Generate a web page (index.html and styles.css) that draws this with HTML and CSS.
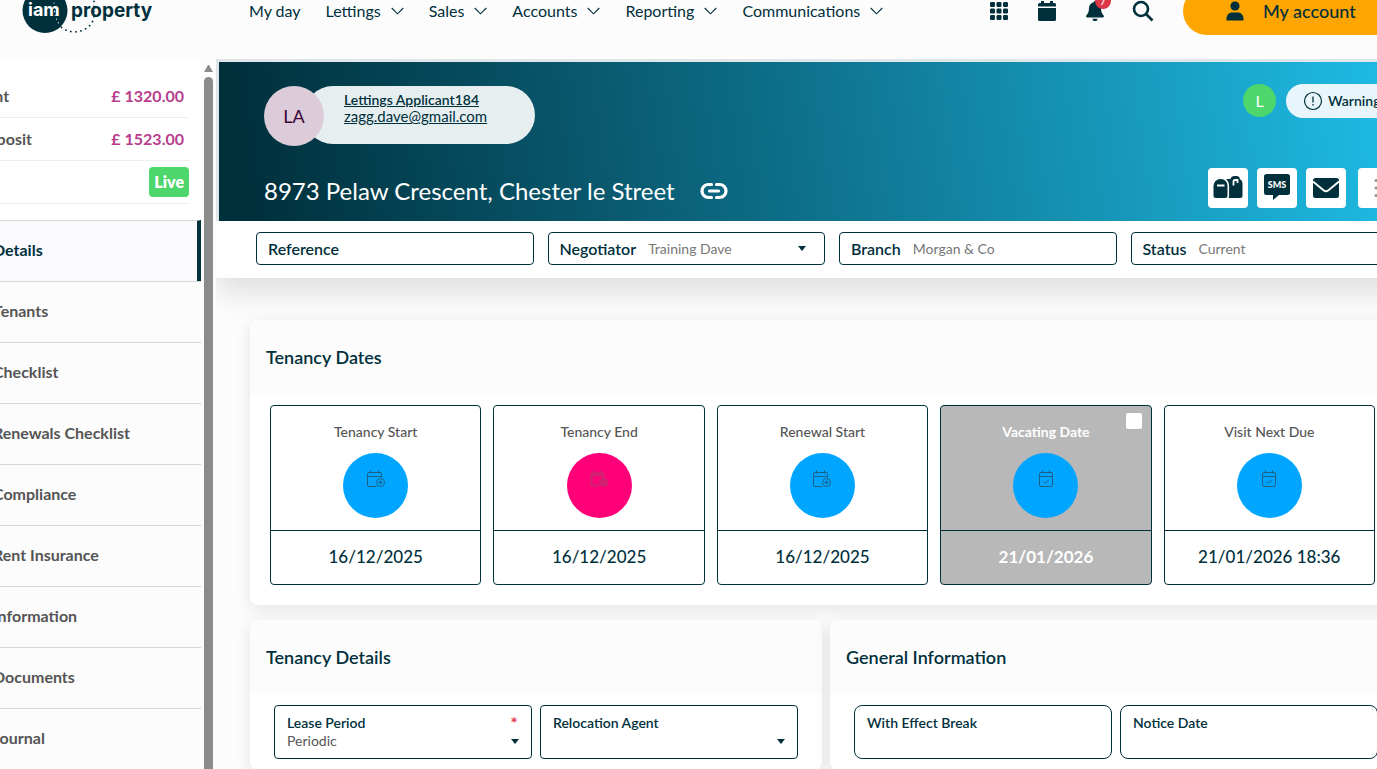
FILE: index.html
```html
<!DOCTYPE html>
<html lang="en">
<head>
<meta charset="utf-8">
<title>Tenancy - 8973 Pelaw Crescent</title>
<link rel="stylesheet" href="styles.css">
</head>
<body>
<svg class="sprite" aria-hidden="true">
  <symbol id="chevron" viewBox="0 0 13 8"><path d="M.7 1l5.800 5.800L12.300 1" fill="none" stroke="currentColor" stroke-width="1.100"/></symbol>
  <symbol id="cal-plus" viewBox="0 0 20 18"><g fill="none" stroke="currentColor" stroke-width="1"><path d="M10.500 16.500H3A1.500 1.500 0 0 1 1.500 15V4A1.500 1.500 0 0 1 3 2.500h11A1.500 1.500 0 0 1 15.500 4v3.500M1.500 6.500h14M4.500 .500v3M12.500 .500v3"/><circle cx="14.500" cy="12.500" r="4"/><path d="M14.500 10.300v4.400M12.300 12.500h4.400"/></g></symbol>
  <symbol id="cal-plus-solid" viewBox="0 0 20 18"><g fill="none" stroke="currentColor" stroke-width="2.500" opacity=".8"><path d="M10 15.500H4A1.500 1.500 0 0 1 2.500 14V5A1.500 1.500 0 0 1 4 3.500h9A1.500 1.500 0 0 1 14.500 5v3M2.500 5h12M5 .500v3M12 .500v3"/><circle cx="14.500" cy="12.500" r="3.200" fill="currentColor"/></g></symbol>
  <symbol id="cal-check" viewBox="0 0 20 18"><g fill="none" stroke="currentColor" stroke-width="1"><rect x="3.500" y="2.500" width="13" height="14" rx="1.500"/><path d="M3.500 6.500h13M6.500 .500v3M13.500 .500v3M7.300 11.300l2 2 3.600-3.600"/></g></symbol>
</svg>

<header class="topbar">
  <a class="logo" href="#" aria-label="iam property">
    <svg width="132" height="36" viewBox="0 0 132 36">
      <circle cx="23" cy="10.500" r="22.500" fill="#00303c"/>
      <path d="M33 14c1 22 33 24 39 4V1" fill="none" stroke="#00303c" stroke-width="1.800" stroke-linecap="round" stroke-dasharray=".1 5"/>
      <path d="M32 3c0 9 1 16 6 22" fill="none" stroke="#fff" stroke-width="1.200" stroke-linecap="round" stroke-dasharray=".1 4"/>
      <text class="logo-iam" x="6" y="16">iam</text>
      <text class="logo-property" x="49" y="17">property</text>
    </svg>
  </a>
  <nav class="menu">
    <a href="#">My day</a>
    <a href="#">Lettings <svg><use href="#chevron"/></svg></a>
    <a href="#">Sales <svg><use href="#chevron"/></svg></a>
    <a href="#">Accounts <svg><use href="#chevron"/></svg></a>
    <a href="#">Reporting <svg><use href="#chevron"/></svg></a>
    <a href="#">Communications <svg><use href="#chevron"/></svg></a>
  </nav>
  <div class="tools">
    <button class="tool" aria-label="Apps"><svg width="20" height="20" viewBox="0 0 20 20" fill="currentColor"><rect x="1" y="1" width="5" height="5" rx="1.300"/><rect x="7.500" y="1" width="5" height="5" rx="1.300"/><rect x="14" y="1" width="5" height="5" rx="1.300"/><rect x="1" y="7.500" width="5" height="5" rx="1.300"/><rect x="7.500" y="7.500" width="5" height="5" rx="1.300"/><rect x="1" y="14" width="5" height="5" rx="1.300"/><rect x="7.500" y="14" width="5" height="5" rx="1.300"/><rect x="14" y="7.500" width="5" height="5" rx="1.300"/><rect x="14" y="14" width="5" height="5" rx="1.300"/></svg></button>
    <button class="tool" aria-label="Calendar"><svg width="20" height="20" viewBox="0 0 20 20" fill="currentColor"><path d="M4 0h3v2h6V0h3v2h1.500A1.500 1.500 0 0 1 19 3.500V5.500H1V3.500A1.500 1.500 0 0 1 2.500 2H4zM1 7h18v11.500a1.500 1.500 0 0 1-1.500 1.500h-15A1.500 1.500 0 0 1 1 18.500z"/></svg></button>
    <button class="tool" aria-label="Notifications"><svg width="20" height="20" viewBox="0 0 20 20" fill="currentColor"><path d="M10 0a1.200 1.200 0 0 1 1.200 1.200C14 1.800 16 4 16 7c0 4 1 5.500 2.700 7.500.6.900 0 2-1 2H2.300c-1 0-1.600-1.100-1-2C3 12.500 4 11 4 7c0-3 2-5.200 4.800-5.800A1.200 1.200 0 0 1 10 0zM7.500 17.700h5a2.500 2.500 0 0 1-5 0z"/></svg><span class="badge">7</span></button>
    <button class="tool" aria-label="Search"><svg width="22" height="22" viewBox="0 0 22 22" fill="none" stroke="currentColor" stroke-width="2.600"><circle cx="9" cy="9" r="7"/><path d="M14 14l6.500 6.500"/></svg></button>
    <button class="account"><svg width="18" height="20" viewBox="0 0 18 20" fill="currentColor"><circle cx="9" cy="5" r="4.600"/><path d="M.5 19.500c-.5-5.500 2.500-8 6-8h5c3.500 0 6.500 2.500 6 8z"/></svg>My account</button>
  </div>
</header>

<div class="layout">
  <aside class="sidebar">
    <dl class="summary">
      <div><dt>Rent</dt><dd>£ 1320.00</dd></div>
      <div><dt>Deposit</dt><dd>£ 1523.00</dd></div>
      <div><dt></dt><dd class="live">Live</dd></div>
    </dl>
    <nav class="sections">
      <a class="current" href="#">Details</a>
      <a href="#">Tenants</a>
      <a href="#">Checklist</a>
      <a href="#">Renewals Checklist</a>
      <a href="#">Compliance</a>
      <a href="#">Rent Insurance</a>
      <a href="#">Information</a>
      <a href="#">Documents</a>
      <a href="#">Journal</a>
    </nav>
  </aside>
  <div class="scroll"><span class="scroll-arrow"></span><span class="scroll-thumb"></span></div>

  <main class="main">
    <section class="hero">
      <div class="hero-top">
        <div class="person">
          <span class="avatar">LA</span>
          <div class="contact"><a class="strong" href="#">Lettings Applicant184</a><a href="#">zagg.dave@gmail.com</a></div>
        </div>
        <div class="flags">
          <span class="initial">L</span>
          <button class="warnings"><svg width="20" height="20" viewBox="0 0 20 20" fill="none" stroke="currentColor"><circle cx="10" cy="10" r="8.500" stroke-width="1.200"/><path d="M10 5.500v6M10 13v1.500" stroke-width="1.300"/></svg>Warning</button>
        </div>
      </div>
      <div class="hero-bottom">
        <h1>8973 Pelaw Crescent, Chester le Street
          <svg width="28" height="18" viewBox="0 0 28 18" fill="none" stroke="#fff" stroke-width="3.200" stroke-linecap="round"><path d="M11.500 2.500H8.500a6.500 6.500 0 0 0 0 13h3M16.500 2.500h3a6.500 6.500 0 0 1 0 13h-3M9.500 9h9"/></svg>
        </h1>
        <div class="actions">
          <button aria-label="Post"><svg width="32" height="28" viewBox="0 0 32 28"><path d="M1.500 21.500V12A7 7 0 0 1 8.500 5C13 5 15.500 8 15.500 12v9.500a2.500 2.500 0 0 1-2.500 2.500H4a2.500 2.500 0 0 1-2.500-2.500zM16.500 24c.500-1 .600-1.700.600-2.500V12c0-3-1.100-5.300-3.100-7h4.500c.3-2 2-3 4-3h2c2 0 3 1.200 3.500 3.200 1.700.8 2.500 2.300 2.500 4.300v12a2.500 2.500 0 0 1-2.500 2.500z" fill="#00303c"/><path d="M5 11.500h7.500M21.500 11.500V7.500q0-1.500 1.500-1.500h2.500v3" fill="none" stroke="#fff" stroke-width="1.800"/></svg></button>
          <button aria-label="SMS"><svg width="28" height="28" viewBox="0 0 28 28"><path d="M3.500 0h21A2.500 2.500 0 0 1 27 2.500v16a2.500 2.500 0 0 1-2.500 2.500H16l-6 5v-5H3.500A2.500 2.500 0 0 1 1 18.500v-16A2.500 2.500 0 0 1 3.500 0z" fill="#00303c"/><text class="sms" x="14" y="14" text-anchor="middle">SMS</text></svg></button>
          <button aria-label="Email"><svg width="28" height="22" viewBox="0 0 28 22"><rect x="1" y="1" width="26" height="20" rx="2.500" fill="#00303c"/><path d="M1 4.500l10.500 8.700q2.500 2 5 0L27 4.500" fill="none" stroke="#fff" stroke-width="1.800"/></svg></button>
          <button class="more" aria-label="More"><svg width="3" height="20" viewBox="0 0 3 20" fill="#9a8f80"><circle cx="2" cy="2.500" r="1.500"/><circle cx="2" cy="10" r="1.500"/><circle cx="2" cy="17.500" r="1.500"/></svg></button>
        </div>
      </div>
    </section>

    <form class="meta">
      <div class="inline-field"><label for="reference">Reference</label><input id="reference" type="text"></div>
      <div class="inline-field"><label for="negotiator">Negotiator</label><select id="negotiator"><option>Training Dave</option></select><span class="caret"></span></div>
      <div class="inline-field"><label for="branch">Branch</label><input id="branch" type="text" value="Morgan &amp; Co"></div>
      <div class="inline-field"><label for="status">Status</label><input id="status" type="text" value="Current"></div>
    </form>

    <div class="panels">
      <section class="panel wide">
        <h2>Tenancy Dates</h2>
        <div class="dates">
          <article class="date"><div class="date-top"><h3>Tenancy Start</h3><span class="dot"><svg><use href="#cal-plus"/></svg></span></div><p>16/12/2025</p></article>
          <article class="date"><div class="date-top"><h3>Tenancy End</h3><span class="dot pink"><svg><use href="#cal-plus-solid"/></svg></span></div><p>16/12/2025</p></article>
          <article class="date"><div class="date-top"><h3>Renewal Start</h3><span class="dot"><svg><use href="#cal-plus"/></svg></span></div><p>16/12/2025</p></article>
          <article class="date off"><input type="checkbox" aria-label="Vacating Date"><div class="date-top"><h3>Vacating Date</h3><span class="dot"><svg><use href="#cal-check"/></svg></span></div><p>21/01/2026</p></article>
          <article class="date"><div class="date-top"><h3>Visit Next Due</h3><span class="dot"><svg><use href="#cal-check"/></svg></span></div><p>21/01/2026 18:36</p></article>
        </div>
      </section>
      <section class="panel">
        <h2>Tenancy Details</h2>
        <form class="fields">
          <div class="field"><label for="lease">Lease Period <span class="req">*</span></label><select id="lease"><option>Periodic</option></select><span class="caret"></span></div>
          <div class="field"><label for="agent">Relocation Agent</label><select id="agent"><option></option></select><span class="caret"></span></div>
        </form>
      </section>
      <section class="panel">
        <h2>General Information</h2>
        <form class="fields round">
          <div class="field"><label for="break">With Effect Break</label><input id="break" type="text"></div>
          <div class="field"><label for="notice">Notice Date</label><input id="notice" type="text"></div>
        </form>
      </section>
    </div>
  </main>
</div>
<button class="help" aria-label="Help"></button>
</body>
</html>
```

FILE: styles.css
```css
:root {
  --ink: #00303c;
  --grey: #555;
}
* { box-sizing: border-box; }
body {
  margin: 0;
  height: 100vh;
  overflow: hidden;
  display: flex;
  flex-direction: column;
  background: #fcfcfc;
  color: var(--ink);
  font: 16px/20px Lato, sans-serif;
}
a { color: inherit; text-decoration: none; }
button, input, select { font: inherit; color: inherit; margin: 0; padding: 0; border: 0; background: none; }
h1, h2, h3, p, dl, dd { margin: 0; font-weight: inherit; }
.sprite { position: absolute; width: 0; height: 0; }

/* top bar */
.topbar { display: flex; align-items: flex-start; height: 59px; flex: none; padding-left: 22px; }
.logo { width: 227px; }
.logo svg { display: block; }
.logo-iam { font: bold 18px Inter, sans-serif; fill: #fff; }
.logo-property { font: bold 19px Inter, sans-serif; fill: var(--ink); }
.menu { display: flex; gap: 25px; line-height: 22px; }
.menu a { display: flex; align-items: center; gap: 10px; }
.menu svg { width: 13px; height: 8px; }
.tools { display: flex; align-items: flex-start; gap: 28px; margin-left: auto; }
.tool { position: relative; width: 20px; height: 22px; display: flex; align-items: center; justify-content: center; }
.tool svg { flex: none; }
.badge {
  position: absolute; left: 10px; top: -7px; width: 16px; height: 16px; border-radius: 8px;
  background: #dc3548; color: #fff; font-size: 11px; line-height: 16px;
}
.account {
  display: flex; align-items: center; gap: 19px; width: 194px; height: 48px; margin: -13px 0 0 2px;
  padding-left: 43px; border-radius: 24px 0 0 24px; background: #ffa500; font-size: 18px; font-weight: 500; white-space: nowrap;
}

.layout { display: flex; flex: 1; min-height: 0; }

/* side column */
.sidebar { width: 201px; flex: none; overflow: hidden; }
.summary { background: #fff; padding: 16px 12px 16px 0; }
.summary div {
  display: flex; align-items: center; justify-content: space-between; height: 43px;
  margin-left: -24px; padding-right: 5px; border-bottom: 1px solid #eee; font-weight: 700;
}
.summary dt { color: var(--grey); }
.summary dd { color: #b83c8b; }
.summary .live { margin-right: -5px; padding: 5px; border-radius: 4px; background: #4cd66c; color: #fff; font-weight: 800; }
.sections a {
  display: flex; align-items: center; height: 61px; margin-left: -7px; padding-bottom: 2px; border-top: 1px solid #d6d6d6;
  color: var(--grey); font-weight: 700;
}
.sections .current { background: #f9f9fe; color: var(--ink); border-right: 4px solid var(--ink); }
.scroll { display: flex; flex-direction: column; width: 9px; flex: none; margin: 6px 3px 0; gap: 5px; }
.scroll-arrow { border: 4px solid transparent; border-top: 0; border-bottom: 7px solid #8b8b8b; }
.scroll-thumb { flex: 1; border-radius: 5px 5px 0 0; background: #8b8b8b; }

/* hero */
.main { flex: 1; min-width: 0; }
.hero {
  border: solid #dfe7ea; border-width: 3px 0 0 3px; height: 162px; padding: 22px 0 13px 45px;
  display: flex; flex-direction: column; justify-content: space-between;
  background: linear-gradient(82deg, #00303c 3%, #0d6c86 47%, #1eb8e1 99%) padding-box;
}
.hero-top, .hero-bottom { display: flex; justify-content: space-between; }
.person { display: flex; margin-top: 2px; }
.avatar {
  width: 60px; height: 60px; border-radius: 30px; z-index: 1; background: #dccbd9; color: #3c0335;
  font-size: 18px; line-height: 60px; text-align: center;
}
.contact {
  display: flex; flex-direction: column; width: 231px; height: 58px; margin-left: -20px; padding: 5px 0 0 40px;
  border-radius: 29px; background: #e6eef0; font-size: 15px; line-height: 17px;
}
.contact a { text-decoration: underline; }
.contact .strong { font-size: 14px; font-weight: 600; }
.flags { display: flex; gap: 10px; }
.initial { width: 33px; height: 33px; border-radius: 17px; background: #4cd66c; color: #fff; text-align: center; line-height: 33px; }
.warnings {
  display: flex; align-items: center; gap: 5px; width: 91px; height: 34px; padding-left: 17px;
  border-radius: 17px 0 0 17px; background: #e8f6fb; font-size: 14px; font-weight: 600;
}
.warnings svg { flex: none; }
h1 { display: flex; align-items: center; gap: 25px; color: #fff; font-size: 24px; line-height: 32px; margin-top: 7px; height: 32px; }
.actions { display: flex; gap: 9px; }
.actions button { display: flex; align-items: center; justify-content: center; width: 40px; height: 40px; border-radius: 4px; background: #fff; }
.actions .more { width: 19px; margin-left: 3px; border-radius: 4px 0 0 4px; justify-content: flex-end; }
.sms { font: 900 9px Lato, sans-serif; fill: #fff; }

/* record summary */
.meta {
  display: grid; grid-template-columns: repeat(4, minmax(0, 1fr)); gap: 14px; padding: 11px 0 13px 40px;
  margin-right: -31px; background: #fff; box-shadow: 0 14px 30px rgba(0, 0, 0, .12); clip-path: inset(0 0 -60px 0);
}
.inline-field {
  display: flex; align-items: center; gap: 12px; height: 33px; padding: 0 11px;
  border: 1px solid var(--ink); border-radius: 4px; font-weight: 600;
}
.inline-field input, .inline-field select { flex: 1; min-width: 0; appearance: none; color: #777; font-size: 14px; font-weight: 400; }
.caret { border: 4px solid transparent; border-top: 5px solid var(--ink); border-bottom: 0; margin-right: 7px; pointer-events: none; }

/* panels */
.panels { display: grid; grid-template-columns: 1fr 1fr; gap: 15px 8px; margin: 42px -25px 0 34px; }
.panel { border-radius: 8px; background: #fff; box-shadow: 0 4px 16px rgba(0, 0, 0, .1); }
.wide { grid-column: 1 / -1; }
h2 { padding: 26px 16px; border-radius: 8px 8px 0 0; background: #fcfcfc; font-size: 18px; line-height: 22px; font-weight: 600; }
.dates { display: grid; grid-template-columns: repeat(5, 1fr); gap: 12px; padding: 11px 27px 20px 20px; }
.date { position: relative; height: 180px; border: 1px solid var(--ink); border-radius: 4px; text-align: center; }
.date-top { height: 125px; padding-top: 16px; border-bottom: 1px solid var(--ink); }
h3 { color: var(--grey); font-size: 14px; font-weight: 500; line-height: 20px; }
.dot { display: block; width: 65px; height: 65px; margin: 11px auto 0; padding-top: 17px; border-radius: 50%; background: #00a5ff; color: #1c6086; }
.pink { background: #ff0078; color: #c82a70; }
.dot svg { display: block; width: 20px; height: 18px; margin: 0 auto; }
.date p { font-size: 17px; line-height: 52px; font-weight: 500; }
.off { background: #b8b8b8; }
.off h3, .off p { color: #fff; font-weight: 700; }
.date input { position: absolute; right: 9px; top: 7px; width: 16px; height: 16px; appearance: none; border-radius: 2px; background: #fff; }
.fields { display: grid; grid-template-columns: 1fr 1fr; gap: 8px; padding: 11px 24px; }
.field {
  display: grid; grid-template-columns: 1fr auto; align-items: center; height: 54px; padding: 8px 5px 8px 12px;
  border: 1px solid var(--ink); border-radius: 4px; font-size: 14px; line-height: 18px;
}
.round .field { border-radius: 8px; }
.field label { grid-column: 1 / -1; display: flex; justify-content: space-between; padding-right: 8px; font-weight: 600; }
.field input, .field select { width: 100%; height: 18px; appearance: none; color: var(--grey); }
.req { color: #dc3548; font-size: 18px; }
.help { position: fixed; right: -44px; bottom: -44px; width: 52px; height: 52px; border-radius: 26px; background: #ffa500; }
```
